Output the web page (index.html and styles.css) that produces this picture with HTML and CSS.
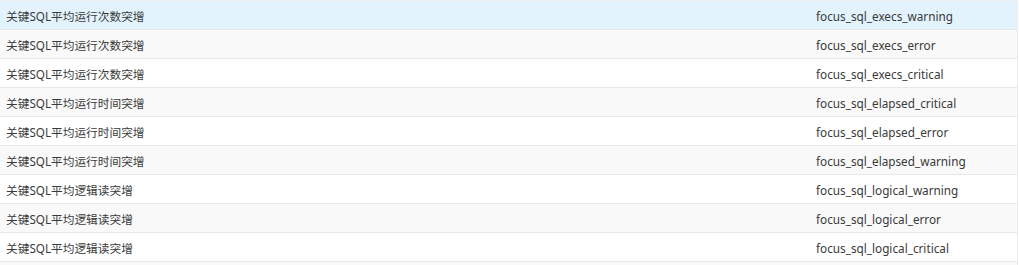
FILE: index.html
```html
<!DOCTYPE html>
<html lang="zh-CN">
<head>
<meta charset="utf-8">
<link rel="stylesheet" href="styles.css">
</head>
<body>
<div class="table">
  <div class="row hover"><div class="cell name">关键SQL平均运行次数突增</div><div class="cell code">focus_sql_execs_warning</div></div>
  <div class="row"><div class="cell name">关键SQL平均运行次数突增</div><div class="cell code">focus_sql_execs_error</div></div>
  <div class="row"><div class="cell name">关键SQL平均运行次数突增</div><div class="cell code">focus_sql_execs_critical</div></div>
  <div class="row"><div class="cell name">关键SQL平均运行时间突增</div><div class="cell code">focus_sql_elapsed_critical</div></div>
  <div class="row"><div class="cell name">关键SQL平均运行时间突增</div><div class="cell code">focus_sql_elapsed_error</div></div>
  <div class="row"><div class="cell name">关键SQL平均运行时间突增</div><div class="cell code">focus_sql_elapsed_warning</div></div>
  <div class="row"><div class="cell name">关键SQL平均逻辑读突增</div><div class="cell code">focus_sql_logical_warning</div></div>
  <div class="row"><div class="cell name">关键SQL平均逻辑读突增</div><div class="cell code">focus_sql_logical_error</div></div>
  <div class="row"><div class="cell name">关键SQL平均逻辑读突增</div><div class="cell code">focus_sql_logical_critical</div></div>
  <div class="row filler"></div>
</div>
</body>
</html>
```
FILE: styles.css
```css
html, body {
  margin: 0;
  padding: 0;
  background: #fff;
}
body {
  height: 265px;
  overflow: hidden;
  font-family: "Noto Sans", "Noto Sans CJK SC", sans-serif;
  font-size: 11.7px;
  color: #3a3a3a;
}
.table {
  display: flex;
  flex-direction: column;
  border-top: 1px solid #eeeeee;
  border-right: 1px solid #eeeeee;
  width: 1017px;
}
.row {
  display: grid;
  grid-template-columns: 810px 1fr;
  height: 28px;
  flex-shrink: 0;
  border-bottom: 1px solid #e8e8e8;
  align-items: center;
}
.row:nth-child(even) {
  background: #f9f9f9;
}
.row.hover {
  background: #e2f3fd;
}
.cell {
  padding-left: 6px;
  white-space: nowrap;
  line-height: 28px;
  padding-top: 1px;
}
.code {
  font-size: 11.75px;
}
```
